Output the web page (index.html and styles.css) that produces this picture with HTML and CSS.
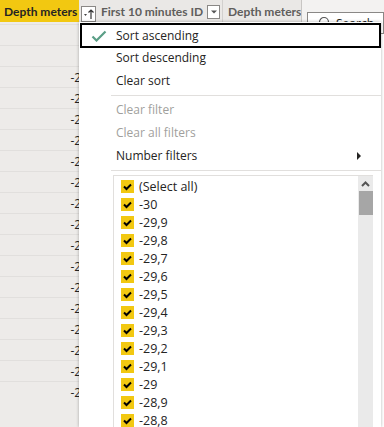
FILE: index.html
```html
<!DOCTYPE html>
<html lang="en">
<head>
    <meta charset="UTF-8">
    <title>Table column filter</title>
    <link rel="stylesheet" href="styles.css">
</head>
<body>
    <div class="table">
        <div class="header">
            <div class="col-head col-active">
                <span class="head-text">Depth meters</span>
                <span class="head-btn">
                    <svg width="12" height="12" viewBox="0 0 12 12">
                        <path d="M1 6 L4 6 L2.5 8 Z" fill="#444"/>
                        <path d="M8 11 L8 2 M5.5 4.5 L8 2 L10.5 4.5" stroke="#333" stroke-width="1.2" fill="none"/>
                    </svg>
                </span>
            </div>
            <div class="col-head col-second">
                <span class="head-text">First 10 minutes ID</span>
                <span class="head-btn head-btn-small">
                    <svg width="8" height="6" viewBox="0 0 8 6"><path d="M1 1.5 L7 1.5 L4 4.5 Z" fill="#555"/></svg>
                </span>
            </div>
            <div class="col-head col-third">
                <span class="head-text">Depth meters (l</span>
            </div>
            <div class="side-pane">
                <div class="search-box">
                    <svg width="14" height="14" viewBox="0 0 14 14"><circle cx="8" cy="6" r="4.5" stroke="#555" stroke-width="1.2" fill="none"/><path d="M4.7 9.3 L1.5 12.5" stroke="#555" stroke-width="1.2"/></svg>
                    <span>Search</span>
                </div>
            </div>
        </div>
        <div class="rows">
            <div class="row"><span class="cell">-30</span></div>
            <div class="row"><span class="cell">-30</span></div>
            <div class="row"><span class="cell">-29,9</span></div>
            <div class="row"><span class="cell">-29,9</span></div>
            <div class="row"><span class="cell">-29,8</span></div>
            <div class="row"><span class="cell">-29,8</span></div>
            <div class="row"><span class="cell">-29,7</span></div>
            <div class="row"><span class="cell">-29,7</span></div>
            <div class="row"><span class="cell">-29,6</span></div>
            <div class="row"><span class="cell">-29,6</span></div>
            <div class="row"><span class="cell">-29,5</span></div>
            <div class="row"><span class="cell">-29,5</span></div>
            <div class="row"><span class="cell">-29,4</span></div>
            <div class="row"><span class="cell">-29,4</span></div>
            <div class="row"><span class="cell">-29,3</span></div>
            <div class="row"><span class="cell">-29,3</span></div>
            <div class="row"><span class="cell">-29,2</span></div>
            <div class="row"><span class="cell">-29,2</span></div>
        </div>
    </div>

    <div class="menu">
        <div class="menu-item focused">
            <svg class="menu-check" width="16" height="12" viewBox="0 0 16 12"><path d="M1.5 6.5 L5.5 10.5 L14.5 1.5" stroke="#5a9e86" stroke-width="2.2" fill="none"/></svg>
            Sort ascending
        </div>
        <div class="menu-item">Sort descending</div>
        <div class="menu-item">Clear sort</div>
        <div class="menu-sep"></div>
        <div class="menu-item disabled">Clear filter</div>
        <div class="menu-item disabled">Clear all filters</div>
        <div class="menu-item">Number filters <span class="submenu-arrow"></span></div>
        <div class="menu-sep"></div>
        <div class="list-box">
            <div class="list">
                <div class="list-item"><span class="box"></span>(Select all)</div>
                <div class="list-item"><span class="box"></span>-30</div>
                <div class="list-item"><span class="box"></span>-29,9</div>
                <div class="list-item"><span class="box"></span>-29,8</div>
                <div class="list-item"><span class="box"></span>-29,7</div>
                <div class="list-item"><span class="box"></span>-29,6</div>
                <div class="list-item"><span class="box"></span>-29,5</div>
                <div class="list-item"><span class="box"></span>-29,4</div>
                <div class="list-item"><span class="box"></span>-29,3</div>
                <div class="list-item"><span class="box"></span>-29,2</div>
                <div class="list-item"><span class="box"></span>-29,1</div>
                <div class="list-item"><span class="box"></span>-29</div>
                <div class="list-item"><span class="box"></span>-28,9</div>
                <div class="list-item"><span class="box"></span>-28,8</div>
            </div>
            <div class="scrollbar">
                <svg width="15" height="14" viewBox="0 0 15 14"><path d="M4 9 L7.5 5.5 L11 9" stroke="#555" stroke-width="2" fill="none"/></svg>
                <div class="thumb"></div>
            </div>
        </div>
    </div>
</body>
</html>
```

FILE: styles.css
```css
/* Page reset */
body, html {
    margin: 0;
    padding: 0;
    height: 100vh;
    overflow: hidden;
    font-family: 'Open Sans', 'Liberation Sans', sans-serif;
    background: linear-gradient(to right, #edebe9 302px, #fff 302px);
    color: #252423;
}

/* Table behind the menu */
.header {
    display: flex;
    height: 22px;
    background-color: #eae8e6;
}

.col-head {
    display: flex;
    align-items: center;
    font-family: Lato, 'Open Sans', sans-serif;
    font-size: 12px;
    font-weight: bold;
    box-sizing: border-box;
}

.col-active {
    width: 96px;
    padding-left: 4px;
    background: linear-gradient(to right, #f2c811 79px, #eae8e6 79px);
    color: #252423;
}

.col-second {
    width: 127px;
    padding-left: 5px;
    color: #605e5c;
    border-right: 1px solid #d2d0ce;
}

.col-third {
    width: 79px;
    padding-left: 5px;
    color: #605e5c;
    overflow: hidden;
    white-space: nowrap;
    border-right: 1px solid #c8c6c4;
}

.head-text {
    white-space: nowrap;
}

.head-btn {
    display: flex;
    align-items: center;
    justify-content: center;
    width: 15px;
    height: 16px;
    margin-left: auto;
    margin-top: 6px;
    background: #fff;
    border: 1px solid #8a8886;
    box-sizing: border-box;
}

.head-btn-small {
    width: 13px;
    height: 14px;
    margin-right: 2px;
    margin-top: 2px;
}

.side-pane {
    flex: 1;
    padding: 12px 0 0 5px;
    background-color: #f3f2f1;
}

.search-box {
    display: flex;
    align-items: center;
    gap: 6px;
    height: 20px;
    padding-left: 8px;
    background: #fff;
    border: 1px solid #8a8886;
    font-size: 12px;
}

.rows {
    padding-top: 2px;
}

.row {
    height: 21px;
    width: 100px;
    box-sizing: border-box;
    border-top: 1px solid #e1dfdd;
    display: flex;
    align-items: center;
    justify-content: flex-end;
    padding-right: 2px;
    font-size: 12px;
    color: #252423;
}

/* Dropdown menu */
.menu {
    position: absolute;
    left: 79px;
    top: 22px;
    width: 302px;
    bottom: 0;
    display: flex;
    flex-direction: column;
    padding-top: 1px;
    box-sizing: border-box;
    background: #fff;
    box-shadow: 0 0 3px rgba(0, 0, 0, 0.3);
    font-size: 12px;
}

.menu-item {
    position: relative;
    display: flex;
    align-items: center;
    flex-shrink: 0;
    height: 23px;
    padding-left: 34px;
    border: 2px solid transparent;
    box-sizing: border-box;
    margin: 0 0 0 1px;
}

.menu-item.focused {
    height: 25px;
    border-color: #000;
    margin-bottom: -2px;
}

.menu-item.disabled {
    color: #a19f9d;
}

.menu-check {
    position: absolute;
    left: 9px;
    top: 5px;
}

.submenu-arrow {
    margin-left: auto;
    margin-right: 18px;
    border-left: 4px solid #252423;
    border-top: 4px solid transparent;
    border-bottom: 4px solid transparent;
}

.menu-sep {
    flex-shrink: 0;
    margin: 3px 0 2px 32px;
    border-top: 1px solid #e1dfdd;
}

.list-box {
    flex: 1;
    display: flex;
    min-height: 0;
    overflow: hidden;
    margin: 2px 0 0 34px;
    width: 260px;
    border-top: 1px solid #e1dfdd;
    border-left: 1px solid #e1dfdd;
    box-sizing: border-box;
}

.list {
    flex: 1;
    padding: 1px 0 0 7px;
}

.list-item {
    display: flex;
    align-items: center;
    height: 18px;
    gap: 5px;
    font-size: 12.5px;
}

.box {
    width: 13px;
    height: 13px;
    background-color: #f2c811;
    background-image: url("data:image/svg+xml,%3Csvg xmlns='http://www.w3.org/2000/svg' width='13' height='13' viewBox='0 0 13 13'%3E%3Cpath d='M3 6.5 L5.5 9 L10 4.5' stroke='%23000' stroke-width='2' fill='none'/%3E%3C/svg%3E");
}

.scrollbar {
    width: 15px;
    background: #eaeaea;
    display: flex;
    flex-direction: column;
    align-items: center;
}

.scrollbar svg {
    margin-top: 1px;
}

.thumb {
    width: 14px;
    height: 24px;
    background: #a6a6a6;
}
```
